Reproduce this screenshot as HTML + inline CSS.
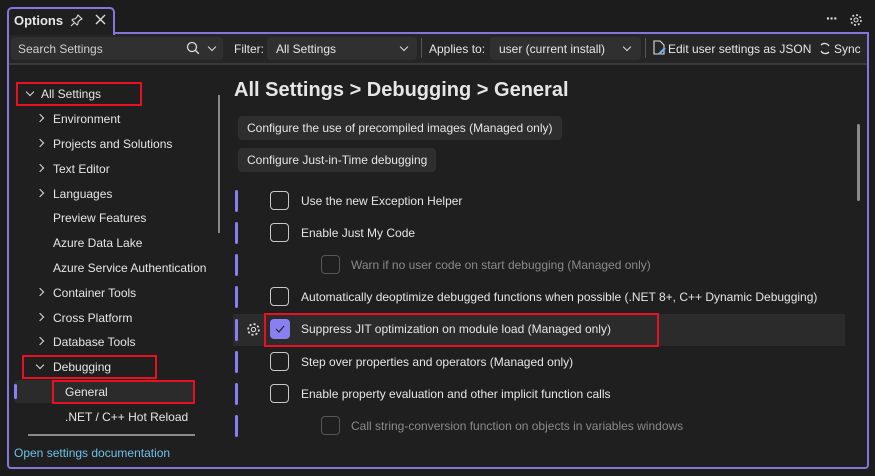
<!DOCTYPE html>
<html><head><meta charset="utf-8"><style>
*{box-sizing:border-box;margin:0;padding:0}
body{width:875px;height:476px;background:#1c1c1c;font-family:"Liberation Sans",sans-serif;font-size:12px;color:#e6e6e6;position:relative;overflow:hidden}
.a{position:absolute;white-space:nowrap}
.panel{position:absolute;left:7px;top:32px;width:862px;height:437px;border:2px solid #8377dd;border-top-width:2px;background:#1f1f1f;border-radius:0 0 4px 4px}
.tab{position:absolute;left:7px;top:7px;width:108px;height:28px;border:2px solid #8377dd;border-bottom:none;border-radius:5px 5px 0 0;background:#1f1f1f;z-index:2}
.tb{position:absolute;left:9px;top:34px;width:858px;height:31px;background:#262626;border-bottom:2px solid #3a3a3a}
.in{position:absolute;background:#303030;border-radius:4px;height:23px}
.box{position:absolute;border:2px solid #e81123}
.cb{position:absolute;width:19px;height:19px;border:1.5px solid #c9c9c9;border-radius:4px}
.bar{position:absolute;left:235px;width:3px;height:22px;background:#8a7ff0;border-radius:2px}
.btn{position:absolute;background:#2e2e2e;border-radius:4px;height:24px;padding:0 9px;line-height:24px}
.chev{position:absolute;width:6px;height:6px;border-right:1.5px solid #ddd;border-bottom:1.5px solid #ddd}
</style></head><body>
<div class="panel"></div>
<div class="tab"></div>
<div class="a" style="left:14px;top:13px;font-weight:bold;font-size:13px;z-index:3">Options</div>
<svg class="a" style="left:70px;top:13px;z-index:3" width="14" height="14" viewBox="0 0 14 14"><path d="M8 2l4 4-2 1-2 2 0 2-1 1-5-5 1-1 2 0 2-2z M4 10l-3 3" stroke="#ddd" fill="none" stroke-width="1.1"/></svg>
<svg class="a" style="left:94px;top:13px;z-index:3" width="13" height="13"><path d="M2 2l9 9M11 2l-9 9" stroke="#ddd" stroke-width="1.4"/></svg>
<div class="a" style="left:826px;top:10px;font-size:14px;font-weight:bold;letter-spacing:-1px">···</div>
<svg class="a" style="left:849px;top:13px" width="14" height="14" viewBox="0 0 14 14"><circle cx="7" cy="7" r="2" stroke="#ddd" fill="none"/><circle cx="7" cy="7" r="5" stroke="#ddd" fill="none" stroke-width="1.6" stroke-dasharray="2 1.9"/></svg>
<div class="tb"></div>
<div class="in" style="left:11px;top:37px;width:212px"></div>
<div class="a" style="left:18px;top:42px;color:#cfcfcf">Search Settings</div>
<svg class="a" style="left:186px;top:41px" width="14" height="14"><circle cx="6" cy="6" r="4.5" stroke="#ddd" fill="none" stroke-width="1.3"/><path d="M9.3 9.3l3.5 3.5" stroke="#ddd" stroke-width="1.4"/></svg>
<div class="chev" style="left:209px;top:44px;transform:rotate(45deg)"></div>
<div class="a" style="left:234px;top:42px">Filter:</div>
<div class="in" style="left:267px;top:37px;width:150px"></div>
<div class="a" style="left:276px;top:42px">All Settings</div>
<div class="chev" style="left:401px;top:44px;transform:rotate(45deg)"></div>
<div class="a" style="left:421px;top:38px;width:1px;height:20px;background:#555"></div>
<div class="a" style="left:429px;top:42px">Applies to:</div>
<div class="in" style="left:490px;top:37px;width:151px"></div>
<div class="a" style="left:499px;top:42px">user (current install)</div>
<div class="chev" style="left:624px;top:44px;transform:rotate(45deg)"></div>
<div class="a" style="left:645px;top:38px;width:1px;height:20px;background:#555"></div>
<svg class="a" style="left:652px;top:40px" width="15" height="16"><path d="M2 1h6l4 4v9H2z" stroke="#ddd" fill="none" stroke-width="1.1"/><path d="M7 14l6-6" stroke="#6ab0f0" stroke-width="2.2"/></svg>
<div class="a" style="left:668px;top:42px">Edit user settings as JSON</div>
<svg class="a" style="left:818px;top:41px" width="14" height="15"><path d="M3 4a5 5 0 0 1 8 1M11 11a5 5 0 0 1-8-1" stroke="#ddd" fill="none" stroke-width="1.3"/></svg>
<div class="a" style="left:834px;top:42px">Sync</div>

<!-- tree -->
<div class="chev" style="left:27px;top:89px;transform:rotate(45deg)"></div>
<div class="a" style="left:41px;top:87px">All Settings</div>
<div class="chev" style="left:37px;top:115px;transform:rotate(-45deg)"></div><div class="a" style="left:53px;top:112px">Environment</div>
<div class="chev" style="left:37px;top:140px;transform:rotate(-45deg)"></div><div class="a" style="left:53px;top:137px">Projects and Solutions</div>
<div class="chev" style="left:37px;top:165px;transform:rotate(-45deg)"></div><div class="a" style="left:53px;top:162px">Text Editor</div>
<div class="chev" style="left:37px;top:190px;transform:rotate(-45deg)"></div><div class="a" style="left:53px;top:187px">Languages</div>
<div class="a" style="left:53px;top:211px">Preview Features</div>
<div class="a" style="left:53px;top:236px">Azure Data Lake</div>
<div class="a" style="left:53px;top:261px">Azure Service Authentication</div>
<div class="chev" style="left:37px;top:289px;transform:rotate(-45deg)"></div><div class="a" style="left:53px;top:286px">Container Tools</div>
<div class="chev" style="left:37px;top:314px;transform:rotate(-45deg)"></div><div class="a" style="left:53px;top:311px">Cross Platform</div>
<div class="chev" style="left:37px;top:338px;transform:rotate(-45deg)"></div><div class="a" style="left:53px;top:335px">Database Tools</div>
<div class="chev" style="left:37px;top:362px;transform:rotate(45deg)"></div><div class="a" style="left:53px;top:360px">Debugging</div>
<div class="a" style="left:14px;top:380px;width:180px;height:23px;background:#2b2b2b;border-radius:4px"></div>
<div class="a" style="left:14px;top:384px;width:3px;height:15px;background:#8a7ff0;border-radius:2px"></div>
<div class="a" style="left:65px;top:385px">General</div>
<div class="a" style="left:65px;top:410px">.NET / C++ Hot Reload</div>
<div class="a" style="left:218px;top:95px;width:2px;height:138px;background:#8a8a8a"></div>
<div class="a" style="left:28px;top:434px;width:167px;height:2px;background:#8a8a8a"></div>
<div class="a" style="left:14px;top:446px;color:#6ec0e8">Open settings documentation</div>
<div class="box" style="left:16px;top:82px;width:126px;height:24px"></div>
<div class="box" style="left:22px;top:355px;width:135px;height:24px"></div>
<div class="box" style="left:52px;top:380px;width:143px;height:24px"></div>

<!-- right -->
<div class="a" style="left:234px;top:79px;font-size:20px;font-weight:bold">All Settings &gt; Debugging &gt; General</div>
<div class="btn" style="left:238px;top:116px">Configure the use of precompiled images (Managed only)</div>
<div class="btn" style="left:238px;top:148px">Configure Just-in-Time debugging</div>
<div class="a" style="left:857px;top:124px;width:3px;height:77px;background:#8a8a8a;border-radius:2px"></div>

<div class="a" style="left:233px;top:314px;width:612px;height:32px;background:#2b2b2b"></div>
<div class="bar" style="top:190px"></div><div class="cb" style="left:270px;top:191px"></div><div class="a" style="left:301px;top:194px">Use the new Exception Helper</div>
<div class="bar" style="top:222px"></div><div class="cb" style="left:270px;top:223px"></div><div class="a" style="left:301px;top:226px">Enable Just My Code</div>
<div class="bar" style="top:254px"></div><div class="cb" style="left:321px;top:255px;border-color:#555"></div><div class="a" style="left:351px;top:258px;color:#8a8a8a">Warn if no user code on start debugging (Managed only)</div>
<div class="bar" style="top:286px"></div><div class="cb" style="left:270px;top:287px"></div><div class="a" style="left:301px;top:290px">Automatically deoptimize debugged functions when possible (.NET 8+, C++ Dynamic Debugging)</div>
<div class="bar" style="top:319px"></div>
<svg class="a" style="left:246px;top:322px" width="15" height="15" viewBox="0 0 14 14"><circle cx="7" cy="7" r="2" stroke="#ddd" fill="none"/><circle cx="7" cy="7" r="5" stroke="#ddd" fill="none" stroke-width="1.6" stroke-dasharray="2 1.9"/></svg>
<div class="a" style="left:270px;top:319px;width:20px;height:20px;background:#8a7ff0;border-radius:4px"></div>
<svg class="a" style="left:274px;top:323px" width="12" height="12"><path d="M2 6l3 3 5-6" stroke="#222" fill="none" stroke-width="1.2"/></svg>
<div class="a" style="left:301px;top:322px">Suppress JIT optimization on module load (Managed only)</div>
<div class="box" style="left:264px;top:313px;width:395px;height:34px"></div>
<div class="bar" style="top:351px"></div><div class="cb" style="left:270px;top:352px"></div><div class="a" style="left:301px;top:355px">Step over properties and operators (Managed only)</div>
<div class="bar" style="top:383px"></div><div class="cb" style="left:270px;top:384px"></div><div class="a" style="left:301px;top:387px">Enable property evaluation and other implicit function calls</div>
<div class="bar" style="top:415px"></div><div class="cb" style="left:321px;top:416px;border-color:#555"></div><div class="a" style="left:351px;top:419px;color:#8a8a8a">Call string-conversion function on objects in variables windows</div>
</body></html>
